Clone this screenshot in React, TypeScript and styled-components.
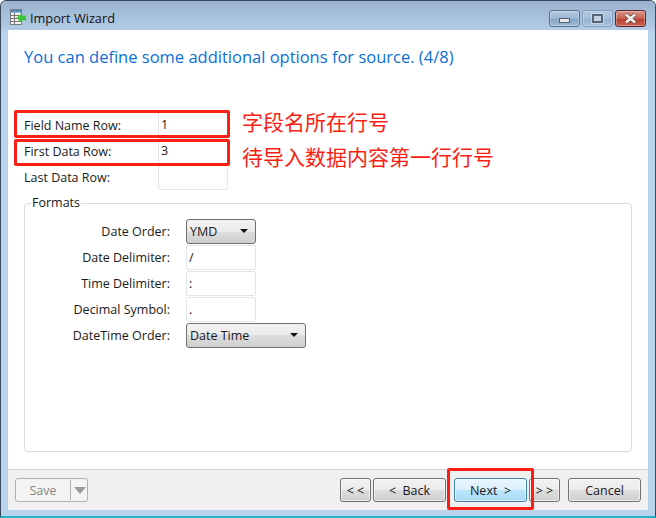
import React from 'react';
import styled, { createGlobalStyle } from 'styled-components';

const GlobalStyle = createGlobalStyle`
	html, body {
		margin: 0;
		padding: 0;
		background: #fff;
	}
	* {
		box-sizing: border-box;
	}
`;

const Window = styled.div`
	position: relative;
	width: 656px;
	height: 518px;
	display: flex;
	flex-direction: column;
	overflow: hidden;
	background: #b9d3ec;
	border: 1px solid #3a4a5a;
	border-bottom: 2px solid #1fb4c8;
	border-radius: 6px 6px 0 0;
	font-family: 'Open Sans', 'Noto Sans', sans-serif;
	font-size: 12.5px;
	color: #1a1a1a;
`;

const TitleBar = styled.div`
	height: 29px;
	flex: none;
	display: flex;
	align-items: center;
	padding: 6px 9px 0 9px;
	background: linear-gradient(#99b3d0, #b4cce6);
	font-size: 12.75px;
	color: #111;
`;

const IconSlot = styled.div`
	flex: none;
	display: flex;
	margin-top: -3px;
`;

const TitleText = styled.span`
	margin-left: 4px;
	margin-top: -1px;
	flex: 1;
`;

const WinButton = styled.div<{ $close?: boolean; $dim?: boolean }>`
	width: 31px;
	height: 17px;
	margin-left: 2px;
	margin-top: -1px;
	display: flex;
	align-items: center;
	justify-content: center;
	border-radius: 3px;
	border: 1px solid ${(p) => (p.$close ? '#5b2530' : p.$dim ? '#7f9ab8' : '#55708f')};
	background: ${(p) =>
		p.$close
			? 'linear-gradient(#d8958a, #c9614f 50%, #b5402e 55%, #c9614f)'
			: p.$dim
				? 'linear-gradient(#b0c7df, #a3bcd8 50%, #97b2d0 55%, #a8c1dc)'
				: 'linear-gradient(#b6cbe2, #9ab5d2 50%, #86a4c5 55%, #a0bad6)'};
	box-shadow: inset 0 0 0 1px rgba(255, 255, 255, 0.3);
`;

const MinGlyph = styled.div`
	width: 11px;
	height: 5px;
	margin-top: 5px;
	background: #e6e8ec;
	border: 1px solid #4d5f75;
`;

const MaxGlyph = styled.div`
	width: 11px;
	height: 9px;
	background: #c6d2e0;
	border: 2px solid #56677c;
	box-shadow: 0 0 0 1px rgba(225, 232, 240, 0.6);
`;

const Body = styled.div`
	flex: 1;
	margin: 0 7px 6px;
	display: flex;
	flex-direction: column;
	background: #fff;
`;

const Main = styled.div`
	flex: 1;
	display: flex;
	flex-direction: column;
	padding: 0 16px;
`;

const Heading = styled.h1`
	margin: 15px 0 0;
	height: 24px;
	font-size: 16.5px;
	line-height: 24px;
	font-weight: 400;
	color: #0a6fd6;
`;

const TopFields = styled.div`
	margin-top: 43px;
	display: flex;
	flex-direction: column;
`;

const FieldRow = styled.div`
	height: 26px;
	display: grid;
	grid-template-columns: 134px 70px;
	align-items: center;
`;

const FieldLabel = styled.label`
	padding-top: 1px;
`;

const TextBox = styled.div`
	height: 26px;
	padding: 0 2px;
	line-height: 23px;
	border: 1px solid #dfe6ee;
	border-radius: 2px;
	background: #fff;
`;

const GroupBox = styled.fieldset`
	margin: 5px 0 0;
	padding: 7px 0 0;
	height: 257px;
	border: 1px solid #d3dde7;
	border-radius: 4px;
`;

const GroupTitle = styled.legend`
	margin-left: 6px;
	padding: 0 1px;
	line-height: 16px;
`;

const FormatRow = styled.div`
	height: 26px;
	display: grid;
	grid-template-columns: 145px auto;
	justify-content: start;
	column-gap: 16px;
	align-items: center;
`;

const FormatLabel = styled.label`
	text-align: right;
`;

const ShortBox = styled(TextBox)`
	width: 70px;
	height: 25px;
	margin-top: 1px;
`;

const Select = styled.div<{ $w: number }>`
	width: ${(p) => p.$w}px;
	height: 25px;
	display: flex;
	align-items: center;
	justify-content: space-between;
	padding: 0 7px 0 3px;
	border: 1px solid #707070;
	border-radius: 3px;
	background: linear-gradient(#f2f2f2, #ebebeb 50%, #dddddd 50%, #cfcfcf);
`;

const Caret = styled.span`
	width: 0;
	height: 0;
	border-left: 4px solid transparent;
	border-right: 4px solid transparent;
	border-top: 4px solid #111;
`;

const Footer = styled.div`
	height: 41px;
	margin-top: 16px;
	flex: none;
	display: flex;
	align-items: center;
	padding: 0 7px;
	background: #f0f0f0;
	border-top: 1px solid #d5d5d5;
`;

const Button = styled.div<{ $w: number; $primary?: boolean; $gap?: number }>`
	width: ${(p) => p.$w}px;
	height: 24px;
	margin-left: ${(p) => p.$gap ?? 0}px;
	display: flex;
	align-items: center;
	justify-content: center;
	white-space: pre;
	border: 1px solid ${(p) => (p.$primary ? '#3c7fb1' : '#707070')};
	border-radius: 3px;
	background: ${(p) =>
		p.$primary
			? 'linear-gradient(#eaf6fd, #d9f0fc 50%, #bee6fd 50%, #a7d9f5)'
			: 'linear-gradient(#f2f2f2, #ebebeb 50%, #dddddd 50%, #cfcfcf)'};
	box-shadow: inset 0 0 0 1px rgba(255, 255, 255, 0.6);
`;

const SaveButton = styled.div`
	width: 73px;
	height: 24px;
	display: flex;
	align-items: center;
	margin-right: auto;
	border: 1px solid #adb2b5;
	border-radius: 3px;
	background: #f4f4f4;
	color: #838383;
`;

const SaveLabel = styled.span`
	width: 54px;
	text-align: center;
`;

const SaveSplit = styled.span`
	width: 1px;
	height: 20px;
	background: #adb2b5;
`;

const SaveCaret = styled.span`
	margin-left: 3px;
	width: 0;
	height: 0;
	border-left: 6px solid transparent;
	border-right: 6px solid transparent;
	border-top: 7px solid #9a9a9a;
`;

const Highlight = styled.div<{ $l: number; $t: number; $w: number; $h: number }>`
	position: absolute;
	left: ${(p) => p.$l}px;
	top: ${(p) => p.$t}px;
	width: ${(p) => p.$w}px;
	height: ${(p) => p.$h}px;
	border: 3px solid #fa1e14;
	border-radius: 2px;
`;

const Note = styled.div<{ $l: number; $t: number }>`
	position: absolute;
	left: ${(p) => p.$l}px;
	top: ${(p) => p.$t}px;
	font-family: 'Noto Sans CJK SC', sans-serif;
	font-size: 21px;
	line-height: 26px;
	color: #fa1e14;
	white-space: nowrap;
`;

const AppIcon = () => (
	<svg width="16" height="17" viewBox="0 0 16 17">
		<rect x="0.5" y="0.5" width="11" height="15" fill="#f2f2ee" stroke="#7a7a7a" />
		<rect x="1" y="1" width="10" height="2.5" fill="#4f8cc4" />
		<path d="M1 6.5h10M1 9.5h10M1 12.5h10M4.5 3.5v12" stroke="#777" fill="none" />
		<path d="M6.5 9L11.5 4V6.5H16V11.5H11.5V14Z" fill="#3fc73a" />
	</svg>
);

const CloseGlyph = () => (
	<svg width="15" height="11" viewBox="0 0 15 11">
		<path d="M3 1.5L12 9.5M12 1.5L3 9.5" stroke="#5a3a3a" strokeWidth="4" />
		<path d="M3 1.5L12 9.5M12 1.5L3 9.5" stroke="#eceef0" strokeWidth="2.8" />
	</svg>
);

const fields = [
	{ label: 'Field Name Row:', value: '1' },
	{ label: 'First Data Row:', value: '3' },
	{ label: 'Last Data Row:', value: '' },
];

const App: React.FC = (): JSX.Element => {
	return (
		<Window>
			<GlobalStyle />
			<TitleBar>
				<IconSlot>
					<AppIcon />
				</IconSlot>
				<TitleText>Import Wizard</TitleText>
				<WinButton>
					<MinGlyph />
				</WinButton>
				<WinButton $dim>
					<MaxGlyph />
				</WinButton>
				<WinButton $close>
					<CloseGlyph />
				</WinButton>
			</TitleBar>
			<Body>
				<Main>
					<Heading>You can define some additional options for source. (4/8)</Heading>
					<TopFields>
						{fields.map(({ label, value }) => (
							<FieldRow key={label}>
								<FieldLabel>{label}</FieldLabel>
								<TextBox>{value}</TextBox>
							</FieldRow>
						))}
					</TopFields>
					<GroupBox>
						<GroupTitle>Formats</GroupTitle>
						<FormatRow>
							<FormatLabel>Date Order:</FormatLabel>
							<Select $w={70}>
								YMD
								<Caret />
							</Select>
						</FormatRow>
						<FormatRow>
							<FormatLabel>Date Delimiter:</FormatLabel>
							<ShortBox>/</ShortBox>
						</FormatRow>
						<FormatRow>
							<FormatLabel>Time Delimiter:</FormatLabel>
							<ShortBox>:</ShortBox>
						</FormatRow>
						<FormatRow>
							<FormatLabel>Decimal Symbol:</FormatLabel>
							<ShortBox>.</ShortBox>
						</FormatRow>
						<FormatRow>
							<FormatLabel>DateTime Order:</FormatLabel>
							<Select $w={120}>
								Date Time
								<Caret />
							</Select>
						</FormatRow>
					</GroupBox>
				</Main>
				<Footer>
					<SaveButton>
						<SaveLabel>Save</SaveLabel>
						<SaveSplit />
						<SaveCaret />
					</SaveButton>
					<Button $w={31}>{'< <'}</Button>
					<Button $w={73} $gap={2}>
						{'<  Back'}
					</Button>
					<Button $w={73} $gap={8} $primary>
						{'Next  >'}
					</Button>
					<Button $w={31} $gap={2}>
						{'> >'}
					</Button>
					<Button $w={73} $gap={8}>
						Cancel
					</Button>
				</Footer>
			</Body>
			<Highlight $l={13} $t={109} $w={216} $h={28} />
			<Highlight $l={13} $t={138} $w={216} $h={27} />
			<Highlight $l={446} $t={467} $w={87} $h={42} />
			<Note $l={241} $t={107}>字段名所在行号</Note>
			<Note $l={241} $t={142}>待导入数据内容第一行行号</Note>
		</Window>
	);
};

export default App;
